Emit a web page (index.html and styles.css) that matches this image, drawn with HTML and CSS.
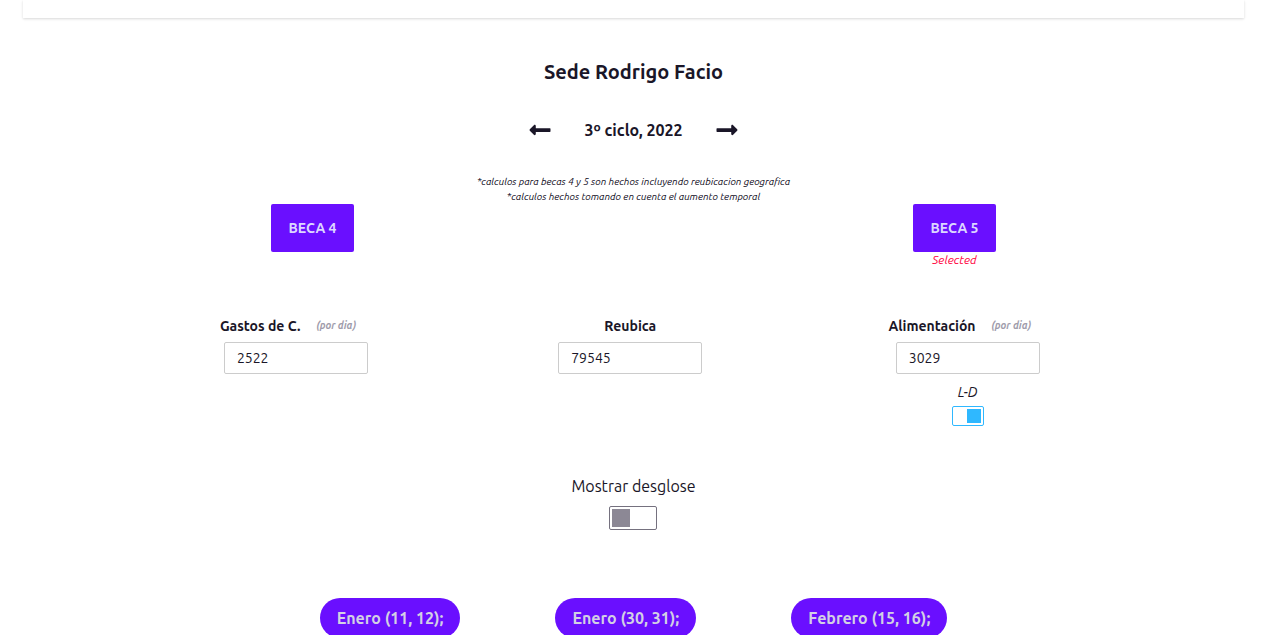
FILE: index.html
```html
<!DOCTYPE html>
<html lang="es">
<head>
<meta charset="utf-8">
<meta name="viewport" content="width=device-width, initial-scale=1">
<title>Sede Rodrigo Facio</title>
<link rel="stylesheet" href="styles.css">
</head>
<body>
<div class="panel"></div>
<main class="page">
  <h1 class="title">Sede Rodrigo Facio</h1>
  <div class="cycle">
    <button class="arrow" type="button" aria-label="Ciclo anterior">
      <svg viewBox="0 0 448 512" width="22" height="24"><path fill="currentColor" d="M134.059 296H436c6.627 0 12-5.373 12-12v-56c0-6.627-5.373-12-12-12H134.059v-46.059c0-21.382-25.851-32.09-40.971-16.971L7.029 239.029c-9.373 9.373-9.373 24.569 0 33.941l86.059 86.059c15.119 15.119 40.971 4.411 40.971-16.971V296z"/></svg>
    </button>
    <h2 class="cycle-name">3º ciclo, 2022</h2>
    <button class="arrow" type="button" aria-label="Ciclo siguiente">
      <svg viewBox="0 0 448 512" width="22" height="24"><path fill="currentColor" transform="translate(448 0) scale(-1 1)" d="M134.059 296H436c6.627 0 12-5.373 12-12v-56c0-6.627-5.373-12-12-12H134.059v-46.059c0-21.382-25.851-32.09-40.971-16.971L7.029 239.029c-9.373 9.373-9.373 24.569 0 33.941l86.059 86.059c15.119 15.119 40.971 4.411 40.971-16.971V296z"/></svg>
    </button>
  </div>
  <div class="notes">
    <p>*calculos para becas 4 y 5 son hechos incluyendo reubicacion geografica</p>
    <p>*calculos hechos tomando en cuenta el aumento temporal</p>
  </div>
  <div class="becas">
    <div class="beca"><button class="beca-button" type="button">BECA 4</button></div>
    <div class="beca"><button class="beca-button" type="button">BECA 5</button><span class="selected">Selected</span></div>
  </div>
  <div class="amounts">
    <div class="amount">
      <div class="amount-head"><label for="gastos">Gastos de C.</label><span class="per-day">(por dia)</span></div>
      <input class="amount-input" id="gastos" type="text" value="2522">
    </div>
    <div class="amount">
      <div class="amount-head"><label for="reubica">Reubica</label></div>
      <input class="amount-input" id="reubica" type="text" value="79545">
    </div>
    <div class="amount">
      <div class="amount-head"><label for="alimentacion">Alimentación</label><span class="per-day">(por dia)</span></div>
      <input class="amount-input" id="alimentacion" type="text" value="3029">
      <label class="days-label" for="days">L-D</label>
      <input class="toggle toggle-small" id="days" type="checkbox" checked>
    </div>
  </div>
  <div class="breakdown">
    <label for="breakdown">Mostrar desglose</label>
    <input class="toggle" id="breakdown" type="checkbox">
  </div>
  <div class="months">
    <button class="month" type="button">Enero (11, 12);</button>
    <button class="month" type="button">Enero (30, 31);</button>
    <button class="month" type="button">Febrero (15, 16);</button>
  </div>
</main>
</body>
</html>
```
FILE: styles.css
```css
* { box-sizing: border-box; }

html { overflow: hidden; }

body {
  margin: 0;
  padding: 0 32px 0 23px;
  background: #fff;
  color: #1a1628;
  font-family: Ubuntu, "Noto Sans", sans-serif;
  font-size: 16px;
  line-height: 24px;
}

h1, h2, p { margin: 0; }

button, input { font-family: inherit; color: inherit; }

.panel {
  height: 18px;
  box-shadow: 0 1px 3px rgba(0, 0, 0, 0.1), 0 1px 2px rgba(0, 0, 0, 0.06);
}

.page {
  display: flex;
  flex-direction: column;
  align-items: center;
  padding-top: 38px;
}

.title {
  font-size: 20px;
  line-height: 32px;
}

.cycle {
  display: flex;
  align-items: center;
  gap: 33px;
  margin-top: 30px;
}

.arrow {
  display: flex;
  padding: 0;
  border: 0;
  background: none;
}

.cycle-name {
  font-size: 16px;
  line-height: 24px;
}

.notes {
  margin-top: 32px;
  color: #0c0818;
  font-size: 10px;
  font-style: italic;
  line-height: 15px;
  text-align: center;
}

.becas {
  display: flex;
  align-self: stretch;
  justify-content: center;
  gap: 559px;
  height: 66px;
}

.beca {
  display: flex;
  flex-direction: column;
  align-items: center;
}

.beca-button {
  width: 83px;
  height: 48px;
  padding: 0;
  border: 0;
  border-radius: 2px;
  background: #6a0fff;
  color: #dcd6ff;
  font-size: 14px;
  font-weight: 700;
}

.selected {
  color: #ff0040;
  font-size: 12px;
  font-style: italic;
  line-height: 16px;
}

.amounts {
  display: flex;
  justify-content: space-around;
  width: 83%;
  margin-top: 46px;
}

.amount {
  display: flex;
  flex-direction: column;
  align-items: center;
}

.amount-head {
  display: flex;
  align-items: center;
  gap: 16px;
  height: 20px;
  font-size: 14px;
  font-weight: 700;
}

.per-day {
  padding-right: 16px;
  color: #a09cab;
  font-size: 10px;
  font-style: italic;
}

.amount-input {
  width: 144px;
  height: 32px;
  margin-top: 6px;
  padding: 0 12px;
  border: 1px solid #ccc;
  border-radius: 2px;
  background: #fff;
  font-size: 14px;
}

.days-label {
  margin-top: 8px;
  font-size: 14px;
  font-style: italic;
  line-height: 20px;
}

.toggle {
  display: flex;
  align-items: center;
  width: 48px;
  height: 24px;
  margin: 8px 0 0;
  padding: 0 2px;
  border: 1px solid #75717f;
  border-radius: 2px;
  appearance: none;
  background: #fff;
}

.toggle::before {
  width: 18px;
  height: 18px;
  background: #8c8895;
  content: "";
}

.toggle-small {
  width: 32px;
  height: 20px;
  margin-top: 4px;
}

.toggle-small::before {
  width: 14px;
  height: 14px;
}

.toggle:checked {
  justify-content: flex-end;
  border-color: #2fb8ff;
}

.toggle:checked::before { background: #2fb8ff; }

.breakdown {
  display: flex;
  flex-direction: column;
  align-items: center;
  margin-top: 48px;
}

.months {
  display: flex;
  gap: 95px;
  margin-top: 68px;
}

.month {
  height: 40px;
  padding: 0 17px;
  border: 0;
  border-radius: 20px;
  background: #6a0fff;
  color: #d3d0e4;
  font-size: 16px;
  font-weight: 700;
}
```
